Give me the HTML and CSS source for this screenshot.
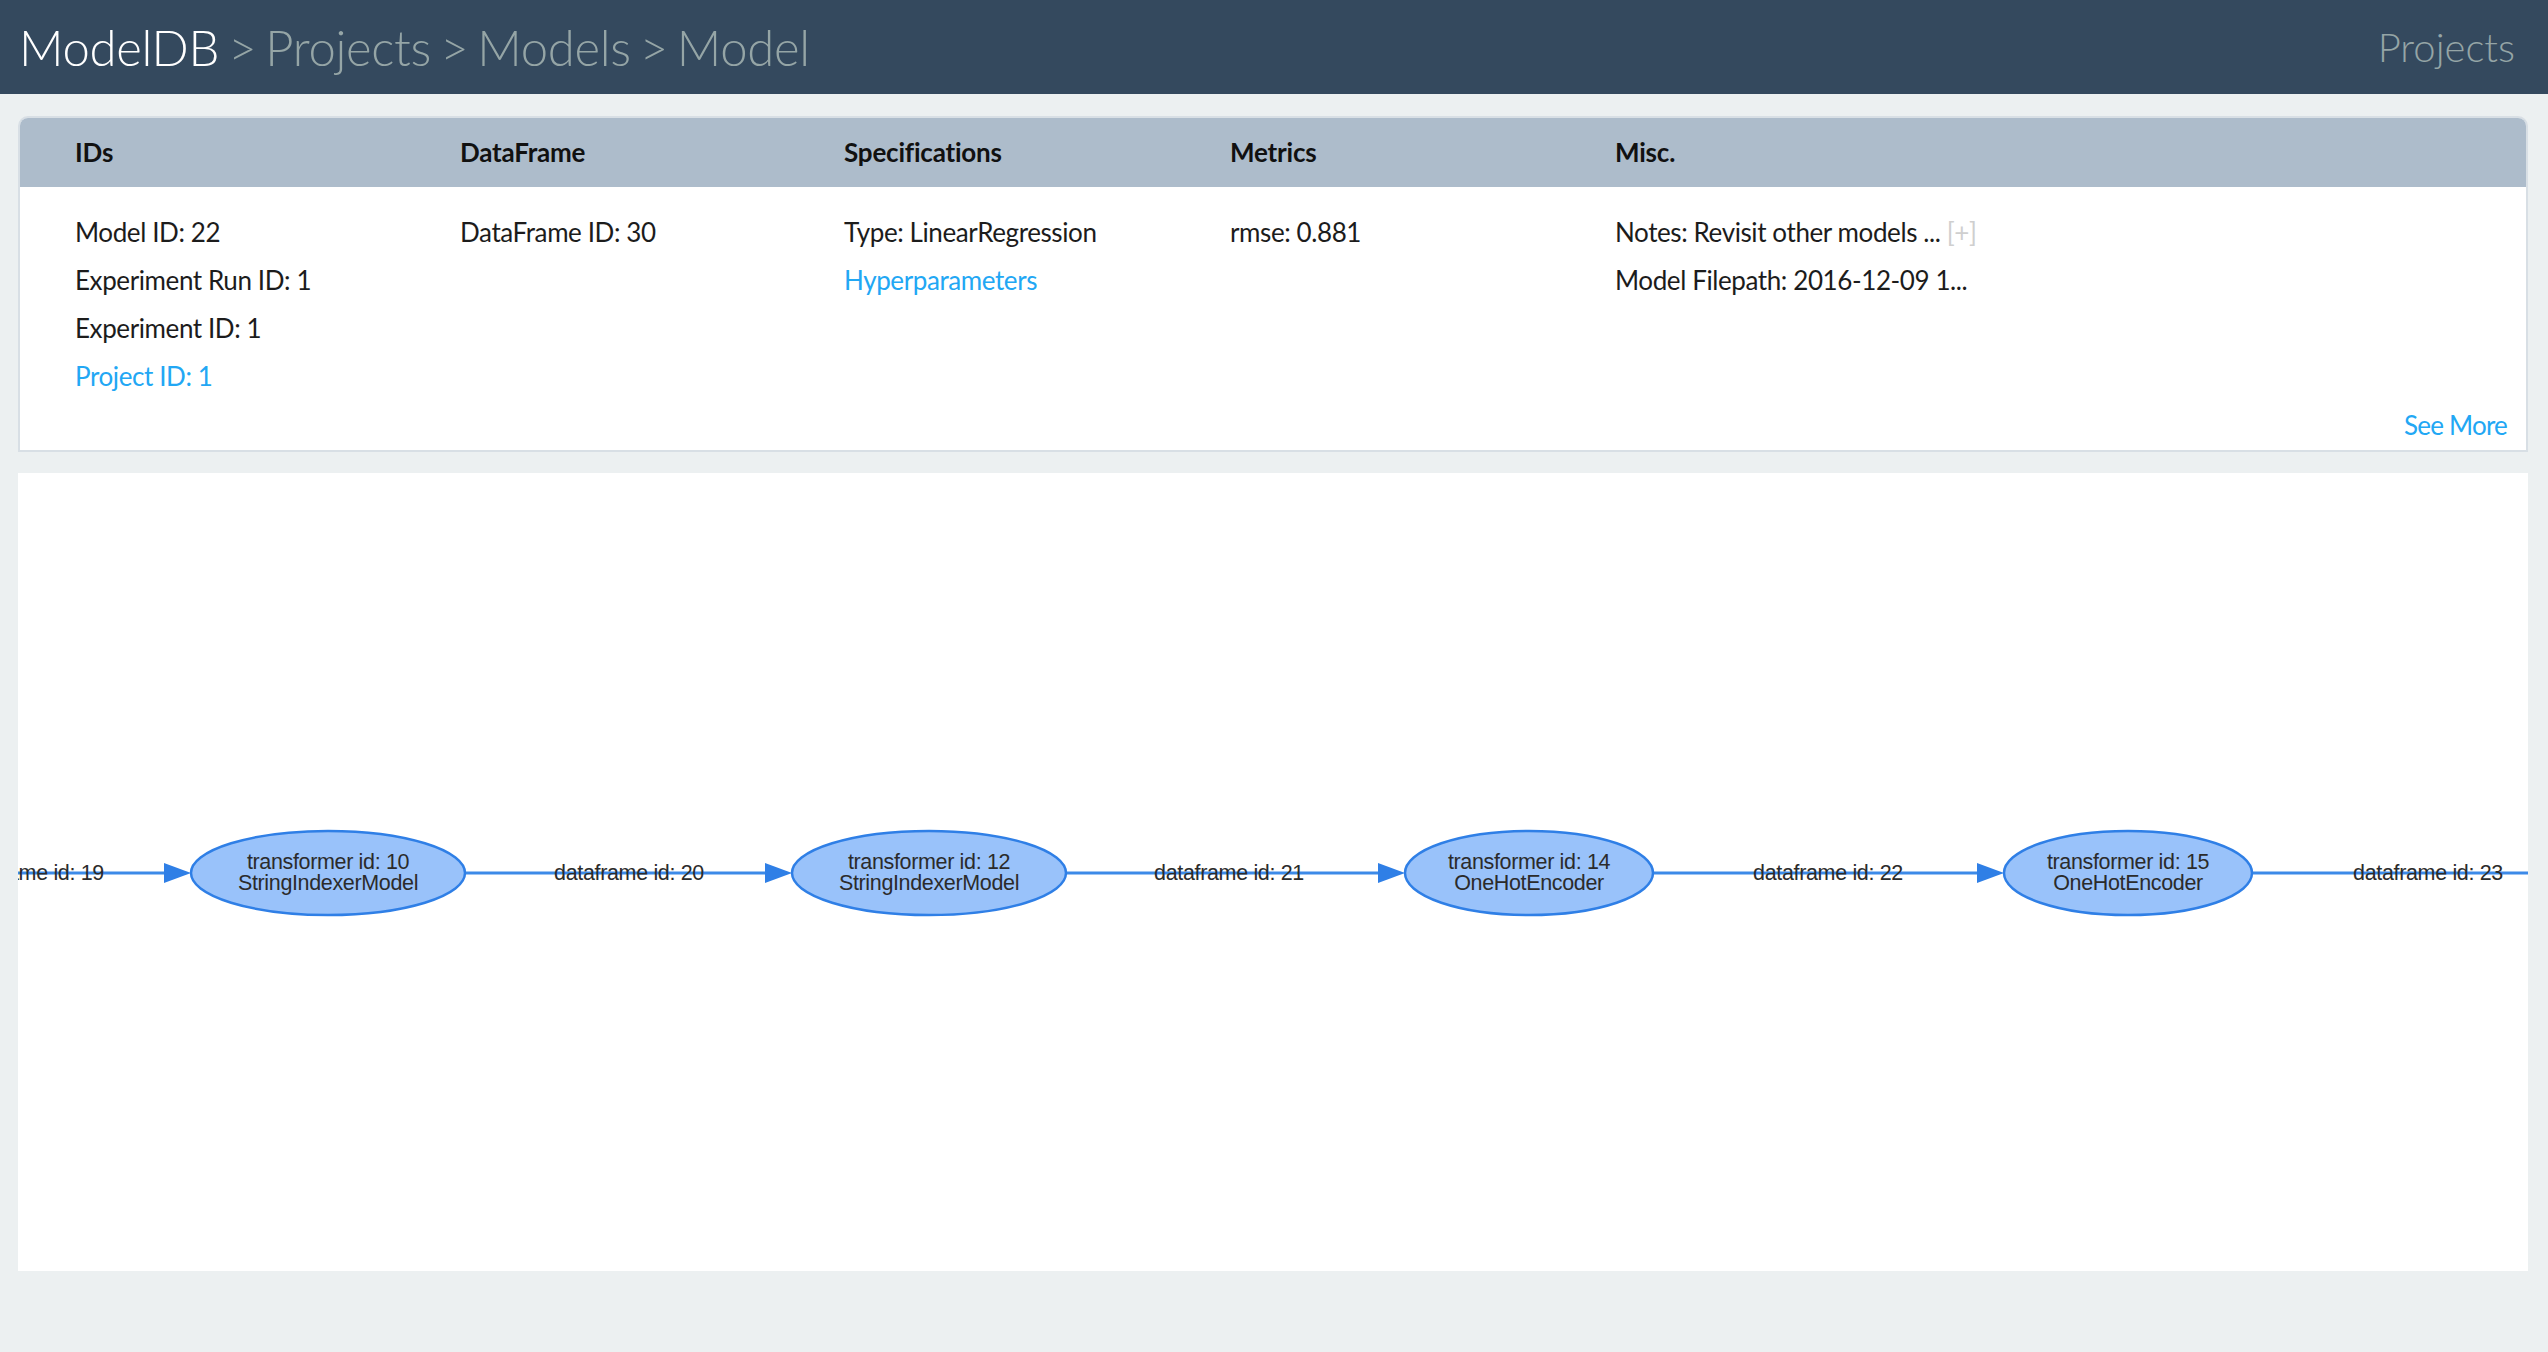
FILE: index.html
```html
<!DOCTYPE html>
<html lang="en">
<head>
<meta charset="utf-8">
<title>ModelDB - Model</title>
<link rel="stylesheet" href="styles.css">
</head>
<body>
<header class="topbar">
  <div class="crumbs"><span class="brand">ModelDB</span><span class="crumb"> &gt; Projects &gt; Models &gt; Model</span></div>
  <a class="nav-link" href="#">Projects</a>
</header>
<main class="page">
  <section class="summary">
    <div class="summary-head">
      <div>IDs</div>
      <div>DataFrame</div>
      <div>Specifications</div>
      <div>Metrics</div>
      <div>Misc.</div>
    </div>
    <div class="summary-body">
      <div class="col">
        <div class="item">Model ID: 22</div>
        <div class="item">Experiment Run ID: 1</div>
        <div class="item">Experiment ID: 1</div>
        <div class="item"><a class="link" href="#">Project ID: 1</a></div>
      </div>
      <div class="col">
        <div class="item">DataFrame ID: 30</div>
      </div>
      <div class="col">
        <div class="item">Type: LinearRegression</div>
        <div class="item"><a class="link" href="#">Hyperparameters</a></div>
      </div>
      <div class="col">
        <div class="item">rmse: 0.881</div>
      </div>
      <div class="col">
        <div class="item">Notes: Revisit other models ... <span class="expand">[+]</span></div>
        <div class="item">Model Filepath: 2016-12-09 1...</div>
      </div>
    </div>
    <div class="see-more"><a class="link" href="#">See More</a></div>
  </section>
  <section class="graph">
    <svg class="graph-svg" width="2510" height="798" viewBox="0 0 2510 798">
      <g class="edges">
        <line x1="0" y1="400" x2="150" y2="400"/>
        <line x1="447" y1="400" x2="752" y2="400"/>
        <line x1="1048" y1="400" x2="1365" y2="400"/>
        <line x1="1635" y1="400" x2="1964" y2="400"/>
        <line x1="2234" y1="400" x2="2510" y2="400"/>
      </g>
      <g class="arrows">
        <polygon points="146,390 173,400 146,410"/>
        <polygon points="747,390 774,400 747,410"/>
        <polygon points="1360,390 1387,400 1360,410"/>
        <polygon points="1959,390 1986,400 1959,410"/>
      </g>
      <g class="edge-labels">
        <text x="11" y="407">dataframe id: 19</text>
        <text x="611" y="407">dataframe id: 20</text>
        <text x="1211" y="407">dataframe id: 21</text>
        <text x="1810" y="407">dataframe id: 22</text>
        <text x="2410" y="407">dataframe id: 23</text>
      </g>
      <g class="nodes">
        <ellipse cx="310" cy="400" rx="137" ry="42"/>
        <ellipse cx="911" cy="400" rx="137" ry="42"/>
        <ellipse cx="1511" cy="400" rx="124" ry="42"/>
        <ellipse cx="2110" cy="400" rx="124" ry="42"/>
      </g>
      <g class="node-labels">
        <text x="310" y="396">transformer id: 10</text>
        <text x="310" y="417">StringIndexerModel</text>
        <text x="911" y="396">transformer id: 12</text>
        <text x="911" y="417">StringIndexerModel</text>
        <text x="1511" y="396">transformer id: 14</text>
        <text x="1511" y="417">OneHotEncoder</text>
        <text x="2110" y="396">transformer id: 15</text>
        <text x="2110" y="417">OneHotEncoder</text>
      </g>
    </svg>
  </section>
</main>
</body>
</html>
```

FILE: styles.css
```css
html, body {
  margin: 0;
  padding: 0;
}
body {
  background: #ecf0f1;
  font-family: Lato, "Open Sans", "Liberation Sans", sans-serif;
  color: #1c1c1c;
}
a {
  text-decoration: none;
}
.topbar {
  height: 94px;
  background: #34495e;
  display: flex;
  align-items: center;
  justify-content: space-between;
  padding: 0 33px 0 19px;
}
.crumbs {
  font-size: 49px;
  font-weight: 300;
  line-height: 94px;
  white-space: pre;
  letter-spacing: -0.3px;
  word-spacing: -4px;
}
.brand {
  color: #ffffff;
}
.crumb {
  color: #95a5a6;
}
.nav-link {
  color: #95a5a6;
  font-size: 40px;
  font-weight: 300;
  line-height: 94px;
}
.page {
  padding: 22px 20px 0 18px;
}
.summary {
  background: #ffffff;
  border: 2px solid #d8dfe5;
  border-radius: 10px 10px 0 0;
  overflow: hidden;
}
.summary-head {
  display: grid;
  grid-template-columns: 385px 384px 386px 385px 1fr;
  padding-left: 55px;
  background: #adbccb;
  height: 69px;
  line-height: 69px;
  font-size: 26px;
  font-weight: 700;
  letter-spacing: -0.2px;
  color: #111;
}
.summary-body {
  display: grid;
  grid-template-columns: 385px 384px 386px 385px 1fr;
  padding: 21px 0 0 55px;
  font-size: 26px;
  line-height: 48px;
  letter-spacing: -0.4px;
}
.item {
  white-space: nowrap;
}
.link {
  color: #22a7f4;
}
.expand {
  color: #cfcfcf;
}
.see-more {
  text-align: right;
  padding-right: 19px;
  font-size: 26px;
  line-height: 50px;
  letter-spacing: -0.8px;
}
.graph {
  margin-top: 21px;
  background: #ffffff;
  height: 798px;
  overflow: hidden;
}
.graph-svg {
  display: block;
}
.edges line {
  stroke: #3c8ae8;
  stroke-width: 3;
}
.arrows polygon {
  fill: #2f7fe6;
}
.nodes ellipse {
  fill: #99c2fa;
  stroke: #2f7fe6;
  stroke-width: 2.5;
}
.edge-labels text,
.node-labels text {
  font-family: "Liberation Sans", Arial, sans-serif;
  font-size: 21.5px;
  letter-spacing: -0.35px;
  fill: #2b2b2b;
  text-anchor: middle;
}
```
